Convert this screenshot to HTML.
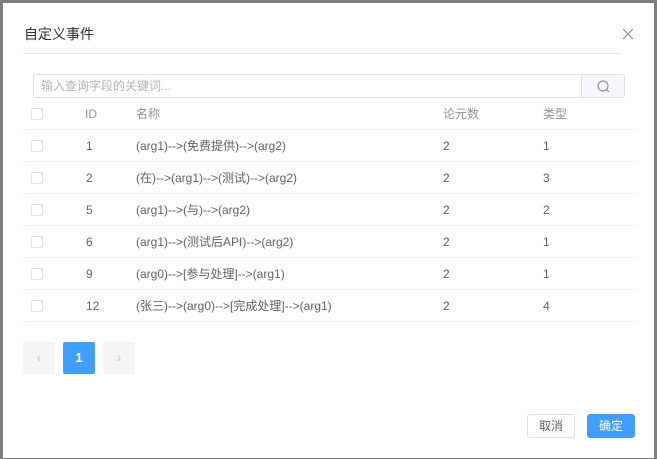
<!DOCTYPE html>
<html><head><meta charset="utf-8"><style>
*{box-sizing:border-box;margin:0;padding:0}
body{width:657px;height:459px;background:#7f7f7f;font-family:"Liberation Sans","Noto Sans CJK SC",sans-serif;position:relative;overflow:hidden;color:#606266;font-size:12px}
.dlg{position:absolute;left:3px;top:3px;width:651px;height:455px;background:#fff}
.abs{position:absolute}
.title{left:21px;top:22px;font-size:14px;line-height:18px;color:#303133}
.close{left:618px;top:24px;width:14px;height:14px}
.hr{height:1px;background:#e4e7ed}
.search{left:30px;top:71px;width:592px;height:24px;border:1px solid #dcdfe6;border-radius:3px}
.search span{position:absolute;left:7px;top:0;line-height:22px;color:#b0b3b8;font-size:12px}
.sbtn{position:absolute;right:0;top:0;width:43px;height:22px;background:#f5f7fa;border-left:1px solid #dcdfe6}
.row{position:absolute;left:20px;width:612px;height:32px;border-bottom:1px solid #ebeef5}
.row div{position:absolute;top:1px;line-height:31px;height:31px}
.row .cb{width:12px;height:12px;border:1px solid #dcdfe6;border-radius:2px;left:8px;top:10px;line-height:0}
.h div{color:#909399}
.pg{top:339px;width:32px;height:32px;border-radius:2px;background:#f4f4f5;color:#c0c4cc;text-align:center;line-height:31px;font-size:14px}
.btn{top:411px;width:48px;height:24px;border-radius:3px;text-align:center;line-height:22px;font-size:12px}
</style></head><body>
<div class="dlg">
<div class="abs title">自定义事件</div>
<svg class="abs close" viewBox="0 0 14 14"><path d="M2 2L12 12M12 2L2 12" stroke="#909399" stroke-width="1.2"/></svg>
<div class="abs hr" style="left:20px;top:50px;width:597px"></div>
<div class="abs search"><span>输入查询字段的关键词...</span><div class="sbtn"><svg width="43" height="22" viewBox="0 0 43 22"><circle cx="21" cy="11" r="5" fill="none" stroke="#909399" stroke-width="1.2"/><path d="M24.5 14.5L27 17" stroke="#909399" stroke-width="1.2"/></svg></div></div>
<div class="row h" style="top:95px"><div class="cb"></div><div style="left:62px">ID</div><div style="left:113px">名称</div><div style="left:420px">论元数</div><div style="left:520px">类型</div></div>
<div class="row" style="top:127px"><div class="cb"></div><div style="left:63px">1</div><div style="left:113px">(arg1)--&gt;(免费提供)--&gt;(arg2)</div><div style="left:420px">2</div><div style="left:520px">1</div></div>
<div class="row" style="top:159px"><div class="cb"></div><div style="left:63px">2</div><div style="left:113px">(在)--&gt;(arg1)--&gt;(测试)--&gt;(arg2)</div><div style="left:420px">2</div><div style="left:520px">3</div></div>
<div class="row" style="top:191px"><div class="cb"></div><div style="left:63px">5</div><div style="left:113px">(arg1)--&gt;(与)--&gt;(arg2)</div><div style="left:420px">2</div><div style="left:520px">2</div></div>
<div class="row" style="top:223px"><div class="cb"></div><div style="left:63px">6</div><div style="left:113px">(arg1)--&gt;(测试后API)--&gt;(arg2)</div><div style="left:420px">2</div><div style="left:520px">1</div></div>
<div class="row" style="top:255px"><div class="cb"></div><div style="left:63px">9</div><div style="left:113px">(arg0)--&gt;[参与处理]--&gt;(arg1)</div><div style="left:420px">2</div><div style="left:520px">1</div></div>
<div class="row" style="top:287px"><div class="cb"></div><div style="left:63px">12</div><div style="left:113px">(张三)--&gt;(arg0)--&gt;[完成处理]--&gt;(arg1)</div><div style="left:420px">2</div><div style="left:520px">4</div></div>
<div class="abs pg" style="left:20px">‹</div>
<div class="abs pg" style="left:60px;background:#409eff;color:#fff;font-weight:bold;font-size:13px">1</div>
<div class="abs pg" style="left:100px">›</div>
<div class="abs btn" style="left:524px;border:1px solid #dcdfe6;color:#606266">取消</div>
<div class="abs btn" style="left:584px;background:#409eff;color:#fff;border:1px solid #409eff">确定</div>
</div>
</body></html>
